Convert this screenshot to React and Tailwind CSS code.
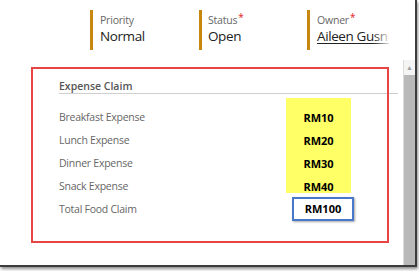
export default function App() {
  const font = { fontFamily: '"Open Sans", "Noto Sans", sans-serif' };
  const labels = ["Breakfast Expense", "Lunch Expense", "Dinner Expense", "Snack Expense", "Total Food Claim"];
  const values = ["RM10", "RM20", "RM30", "RM40"];
  return (
    <div className="relative w-[419px] h-[271px] bg-white overflow-hidden" style={font}>
      <div className="relative w-[417px] h-[267px] bg-white border-r-2 border-b-2 border-[#3c3c3c] shadow-[1px_2px_3px_rgba(0,0,0,0.45)] flex flex-col">
        {/* header */}
        <div className="h-[60px] flex pt-[10px] pl-[90px]">
          <div className="w-[109px] h-[40px] border-l-[3px] border-[#c8870f] pl-[7px] pt-[3px]">
            <div className="text-[10.5px] leading-[14px] text-[#666] tracking-[-0.2px]">Priority</div>
            <div className="text-[13.5px] leading-[18px] text-[#222] tracking-[-0.4px]">Normal</div>
          </div>
          <div className="w-[108px] h-[40px] border-l-[3px] border-[#c8870f] pl-[6px] pt-[3px]">
            <div className="text-[10.5px] leading-[14px] text-[#666] tracking-[-0.2px]">
              Status<span className="text-[#e02020] text-[10px] relative -top-[3px] ml-[1px]">*</span>
            </div>
            <div className="text-[13.5px] leading-[18px] text-[#222] tracking-[-0.4px]">Open</div>
          </div>
          <div className="relative w-[82px] h-[40px] border-l-[3px] border-[#c8870f] pl-[7px] pt-[3px] overflow-hidden">
            <div className="text-[10.5px] leading-[14px] text-[#666] tracking-[-0.2px]">
              Owner<span className="text-[#e02020] text-[10px] relative -top-[3px] ml-[1px]">*</span>
            </div>
            <div className="text-[13.5px] leading-[18px] text-[#222] tracking-[-0.4px] underline underline-offset-2 whitespace-nowrap">Aileen Gusni</div>
            <div className="absolute right-0 top-[16px] w-[16px] h-[22px] bg-gradient-to-r from-transparent to-white/85"></div>
          </div>
        </div>
        {/* body */}
        <div className="flex-1 flex">
          <div className="flex-1 flex flex-col">
            <div className="mt-[20px] ml-[59px] w-[339px] h-[14px] border-b border-[#cfcfcf]">
              <div className="text-[10.5px] leading-[13px] font-semibold text-[#555]">Expense Claim</div>
            </div>
            <div className="mt-[4px] flex">
              <div className="ml-[59px] w-[227px] pt-[8px] flex flex-col">
                {labels.map((l) => (
                  <div key={l} className="h-[23px] leading-[23px] text-[10.5px] tracking-[-0.25px] text-[#666] whitespace-nowrap">{l}</div>
                ))}
              </div>
              <div className="w-[68px] flex flex-col">
                <div className="w-[65px] h-[95px] bg-[#ffff66] pt-[8px] flex flex-col">
                  {values.map((v) => (
                    <div key={v} className="h-[23px] leading-[23px] text-center text-[11px] font-bold text-black">{v}</div>
                  ))}
                </div>
                <div className="mt-[4px] ml-[6px] w-[62px] h-[24px] border-2 border-[#4a78c8] shadow-[1px_1px_2px_rgba(0,0,0,0.35)] bg-white text-center text-[11px] leading-[20px] font-bold text-black">RM100</div>
              </div>
            </div>
          </div>
          <div className="w-[12px] flex flex-col border-l border-[#dcdcdc]">
            <div className="h-[15px] bg-[#f4f4f4] flex items-center justify-center text-[7px] leading-none text-[#a0a0a0]">▲</div>
            <div className="flex-1 bg-[#b9b9b9]"></div>
          </div>
        </div>
        {/* annotation */}
        <div className="absolute left-[31px] top-[67px] w-[358px] h-[176px] border-2 border-[#e84444]"></div>
      </div>
    </div>
  );
}
